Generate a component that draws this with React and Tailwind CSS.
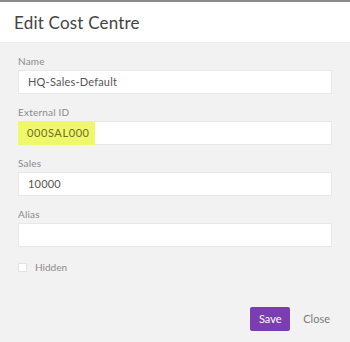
export default function App() {
  const font = { fontFamily: "Lato, 'Open Sans', sans-serif" };
  return (
    <div className="w-[350px] h-[342px] bg-[#f2f2f2] flex flex-col overflow-hidden" style={font}>
      <div className="h-[2px] bg-[#8c8c8c]" />
      <div className="h-[41px] bg-white flex items-center px-[14px] border-b border-[#ececec]">
        <span className="text-[17px] leading-none text-[#444] font-normal tracking-[0.2px]">Edit Cost Centre</span>
      </div>
      <div className="flex flex-col pl-[18px] pr-[18px] pt-[12px]">
        <Field label="Name" value="HQ-Sales-Default" />
        <div className="flex flex-col mb-[12px]">
          <div className="h-[12px] text-[10px] leading-[12px] text-[#8a8a8a] tracking-[0.2px]">External ID</div>
          <div className="mt-[3px] h-[24px] bg-white border border-[#e8e8e8] flex items-stretch">
            <div className="w-[77px] -ml-px -my-px bg-[#eef86a] flex items-center pl-[9px] text-[11px] text-[#6e6e28] tracking-[0.6px]">
              000SAL000
            </div>
          </div>
        </div>
        <Field label="Sales" value="10000" />
        <Field label="Alias" value="" />
        <div className="flex items-center mt-[2px] h-[12px]">
          <div className="w-[9px] h-[9px] bg-white border border-[#e4e4e4]" />
          <span className="ml-[8px] text-[10px] text-[#8a8a8a]">Hidden</span>
        </div>
      </div>
      <div className="flex items-center justify-end mt-[34px] pr-[20px]">
        <button className="w-[40px] h-[24px] ml-px bg-[#7b3db2] text-white text-[11px] rounded-[2px] flex items-center justify-center">
          Save
        </button>
        <span className="ml-[13px] text-[11px] text-[#7a7a7a]">Close</span>
      </div>
    </div>
  );
}

function Field({ label, value }) {
  return (
    <div className="flex flex-col mb-[12px]">
      <div className="h-[12px] text-[10px] leading-[12px] text-[#8a8a8a] tracking-[0.2px]">{label}</div>
      <div className="mt-[3px] h-[24px] bg-white border border-[#e8e8e8] flex items-center pl-[9px] text-[11px] text-[#555] tracking-[0.2px]">
        {value}
      </div>
    </div>
  );
}
